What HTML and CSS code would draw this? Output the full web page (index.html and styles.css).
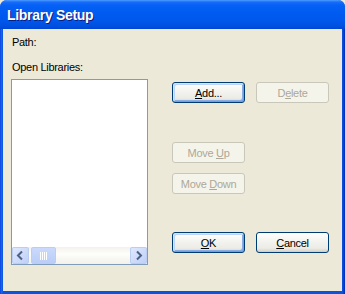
FILE: index.html
```html
<!DOCTYPE html>
<html>
<head>
<meta charset="utf-8">
<link rel="stylesheet" href="styles.css">
</head>
<body>
<div class="window">
  <div class="titlebar"><span class="title">Library Setup</span></div>
  <div class="client">
    <div class="left">
      <div class="label path">Path:</div>
      <div class="label open">Open Libraries:</div>
      <div class="listbox">
        <div class="list-area"></div>
        <div class="hscroll">
          <div class="sbtn"><svg width="15" height="15" viewBox="0 0 15 15"><path d="M9 3.5 L5 7.5 L9 11.5" fill="none" stroke="#4d6185" stroke-width="2"/></svg></div>
          <div class="thumb"><svg width="8" height="8" viewBox="0 0 8 8"><path d="M0.5 0V8M2.5 0V8M4.5 0V8M6.5 0V8" stroke="#ffffff" stroke-width="1"/></svg></div>
          <div class="track"></div>
          <div class="sbtn"><svg width="15" height="15" viewBox="0 0 15 15"><path d="M6 3.5 L10 7.5 L6 11.5" fill="none" stroke="#4d6185" stroke-width="2"/></svg></div>
        </div>
      </div>
    </div>
    <div class="right">
      <div class="btnrow row-add">
        <button class="btn focus"><u>A</u>dd...</button>
        <button class="btn disabled">D<u>e</u>lete</button>
      </div>
      <div class="btnrow row-up">
        <button class="btn disabled">Move <u>U</u>p</button>
      </div>
      <div class="btnrow row-down">
        <button class="btn disabled">Move <u>D</u>own</button>
      </div>
      <div class="btnrow row-ok">
        <button class="btn focus"><u>O</u>K</button>
        <button class="btn"><u>C</u>ancel</button>
      </div>
    </div>
  </div>
</div>
</body>
</html>
```

FILE: styles.css
```css
* { box-sizing: border-box; }
html, body { margin: 0; padding: 0; background: #ece9d8; }
body { width: 345px; height: 294px; overflow: hidden; font-family: "Liberation Sans", "DejaVu Sans", sans-serif; font-size: 11px; color: #000; }

.window {
  width: 345px; height: 294px;
  display: flex; flex-direction: column;
  background: linear-gradient(to right, #0831d9 0px, #166aee 1px, #0855dd 3px, #0855dd 342px, #0a4ad8 343px, #0028b8 345px);
  border-radius: 7px 7px 0 0;
  overflow: hidden;
}

.titlebar {
  height: 29px; flex: none;
  display: flex; align-items: center;
  padding-left: 7px;
  background: linear-gradient(to bottom, #4a9eff 0px, #1a6cf8 2px, #0660f6 5px, #005cf2 12px, #0058ec 20px, #0050e0 26px, #0046d4 29px);
}
.title {
  font-family: "Liberation Sans", "DejaVu Sans", sans-serif;
  font-weight: bold; font-size: 14px; color: #fff;
  letter-spacing: -0.3px;
  text-shadow: 1px 1px 0 #0a1e80;
  margin-top: 1px;
}

.client {
  flex: 1;
  margin: 0 3px 3px 3px;
  background: #ece9d8;
  display: flex;
}

.left {
  width: 160px;
  padding-left: 8px;
  display: flex; flex-direction: column;
}
.label { font-size: 11px; line-height: 13px; height: 13px; letter-spacing: -0.3px; }
.path { margin-top: 7px; margin-left: 1px; }
.open { margin-top: 12px; margin-left: 1px; }

.listbox {
  margin-top: 5px;
  width: 137px; height: 186px;
  border: 1px solid #7f9db9;
  background: #fff;
  display: flex; flex-direction: column;
}
.list-area { flex: 1; }
.hscroll {
  height: 17px;
  display: flex;
  background: linear-gradient(to bottom, #f3f1ec, #fefefb 40%, #f2f1ea);
}
.sbtn {
  width: 17px; height: 17px;
  border: 1px solid #bccdf2;
  border-radius: 2px;
  background: linear-gradient(135deg, #dfe8fe, #bfd0f7);
  display: flex; align-items: center; justify-content: center;
}
.thumb {
  margin-left: 2px;
  width: 25px; height: 17px;
  border: 1px solid #bccdf2;
  border-radius: 2px;
  background: linear-gradient(to bottom, #cbdafc, #b9cdf8);
  display: flex; align-items: center; justify-content: center;
}
.track { flex: 1; }

.right {
  flex: 1;
  padding-left: 9px;
  display: flex; flex-direction: column;
}
.btnrow { display: flex; gap: 11px; }
.row-add { margin-top: 53px; }
.row-up { margin-top: 39px; }
.row-down { margin-top: 10px; }
.row-ok { margin-top: 38px; }

.btn {
  width: 73px; height: 21px;
  padding: 0; margin: 0;
  font-family: "Liberation Sans", "DejaVu Sans", sans-serif;
  font-size: 11px; color: #000;
  letter-spacing: -0.3px;
  border: 1px solid #003c74;
  border-radius: 3px;
  background: linear-gradient(to bottom, #ffffff 0%, #f4f4f0 40%, #ecebe6 80%, #d6d0c5 100%);
  box-shadow: inset 0 -1px 0 #d6d0c5;
}
.btn.focus {
  box-shadow: inset 1px 1px 0 #cee7ff, inset -1px -1px 0 #69a3ef, inset 2px 2px 0 #bcd4f6, inset -2px -2px 0 #89ade4;
}
.btn.disabled {
  color: #aca899;
  border-color: #c9c7ba;
  background: #f5f4ea;
  box-shadow: none;
}
u { text-decoration: underline; text-underline-offset: 1px; }
```
